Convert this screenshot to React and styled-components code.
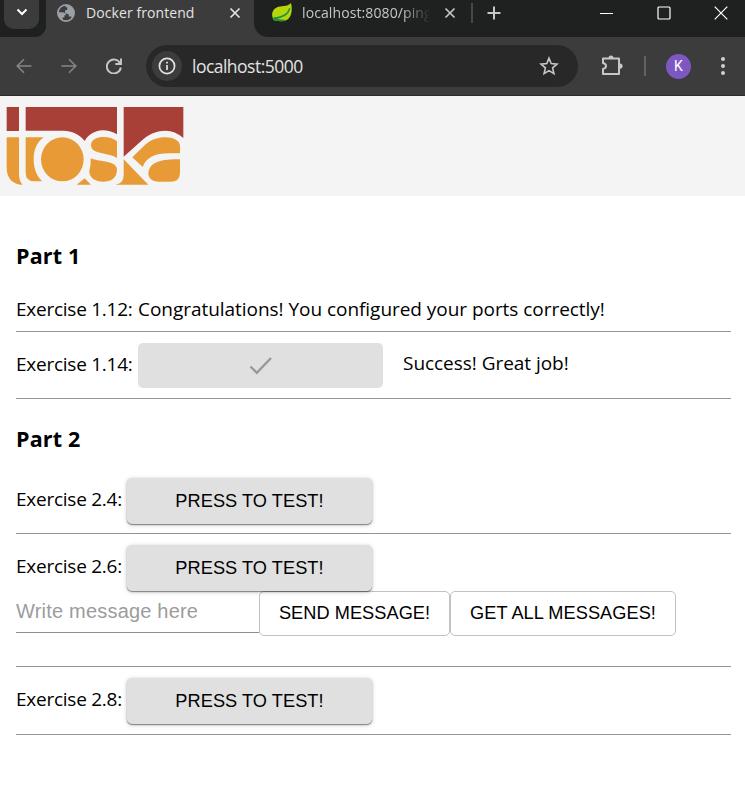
import React from "react";
import styled, { createGlobalStyle, css } from "styled-components";

const Global = createGlobalStyle`
  * { box-sizing: border-box; }
  body { margin: 0; background: #fff; color: #000; font-family: "Open Sans", "Noto Sans", sans-serif; }
  svg { display: block; flex: none; }
`;

const Page = styled.div`
  width: 745px;
  height: 806px;
  overflow: hidden;
  background: #fff;
`;

const TabStrip = styled.div`
  display: flex;
  height: 37px;
  background: #1f2120;
`;

const TabSearchArea = styled.div`
  width: 46px;
  padding-left: 4px;
  background: #1f2120;
  border-bottom-right-radius: 11px;
`;

const TabSearch = styled.div`
  display: flex;
  justify-content: center;
  width: 35px;
  height: 29px;
  padding-top: 4px;
  border-radius: 0 0 10px 10px;
  background: #3c3c3c;
`;

const TabBack = styled.div`
  display: flex;
  background: #3c3c3c;
`;

const Tab = styled.div`
  display: flex;
  align-items: center;
  height: 25px;
  color: ${(p) => (p.$active ? "#e3e3e3" : "#c4c7c5")};
`;

const ActiveTab = styled(Tab)`
  width: 208px;
  padding-left: 11px;
`;

const RestOfStrip = styled.div`
  display: flex;
  width: 491px;
  height: 37px;
  padding-left: 17px;
  background: #1f2120;
  border-bottom-left-radius: 14px;
`;

const TabTitle = styled.span`
  width: ${(p) => p.$w}px;
  margin-left: ${(p) => p.$gap}px;
  overflow: hidden;
  white-space: nowrap;
  font-size: 14px;
  line-height: 22px;
  letter-spacing: ${(p) => p.$track}px;
  ${(p) =>
    p.$fade &&
    css`
      mask-image: linear-gradient(90deg, #000 78%, transparent 100%);
    `}
`;

const Divider = styled.i`
  width: 2px;
  height: 20px;
  background: ${(p) => p.$tone};
  margin: ${(p) => p.$m};
`;

const WindowControls = styled.div`
  display: flex;
  align-items: center;
  height: 25px;
  gap: 43px;
  margin-left: 99px;
  color: #fff;
`;

const Toolbar = styled.div`
  display: flex;
  align-items: center;
  height: 59px;
  padding-left: 16px;
  background: #3c3c3c;
  border-bottom: 1px solid #2a2a2a;
  color: #c7c7c7;
`;

const NavIcons = styled.div`
  display: flex;
  gap: 29px;
  width: 130px;
`;

const AddressBar = styled.div`
  display: flex;
  align-items: center;
  width: 432px;
  height: 42px;
  padding: 0 19px 0 6px;
  border-radius: 21px;
  background: #282828;
`;

const InfoBadge = styled.div`
  display: grid;
  place-items: center;
  width: 30px;
  height: 30px;
  border-radius: 50%;
  background: #3c3c3c;
  color: #e3e3e3;
`;

const Url = styled.span`
  flex: 1;
  margin-left: 10px;
  color: #e3e3e3;
  font-size: 17.5px;
  line-height: 26px;
  letter-spacing: -0.52px;
`;

const Avatar = styled.div`
  display: grid;
  place-items: center;
  width: 25px;
  height: 25px;
  margin-right: 30px;
  border-radius: 50%;
  background: #7e57c2;
  color: #fff;
  font: 14px/25px Roboto, sans-serif;
`;

const SiteHeader = styled.header`
  height: 100px;
  background: #f4f4f4;
`;

const Main = styled.main`
  padding: 42px 14px 0 16px;
`;

const Heading = styled.h3`
  height: 36px;
  margin: ${(p) => p.$before || 0}px 0 ${(p) => p.$after}px;
  font-size: 21.5px;
  line-height: 36px;
  font-weight: 700;
  letter-spacing: 0.15px;
`;

const Exercise = styled.div`
  display: flex;
  flex-direction: column;
  height: ${(p) => p.$h}px;
  padding-top: ${(p) => p.$top}px;
  border-bottom: 1px solid #949494;
`;

const Line = styled.div`
  display: flex;
  align-items: flex-start;
`;

const Text = styled.span`
  margin-top: ${(p) => p.$mt || 0}px;
  white-space: nowrap;
  font-size: 19px;
  line-height: 28px;
  letter-spacing: -0.04px;
`;

const Label = styled(Text)`
  width: ${(p) => p.$w}px;
  letter-spacing: -0.25px;
`;

const buttonBase = css`
  display: flex;
  align-items: center;
  justify-content: center;
  padding: 0;
  border-radius: 5px;
  color: #000;
  font: 18.2px/30px "Liberation Sans", Arial, sans-serif;
  letter-spacing: 0.05px;
  white-space: nowrap;
`;

const TestButton = styled.button`
  ${buttonBase}
  position: relative;
  width: 245px;
  height: 46px;
  padding-bottom: 1px;
  border: 0;
  background: #e0e0e0;
  box-shadow: 0 1px 1px rgba(0, 0, 0, 0.4), 0 1px 4px rgba(0, 0, 0, 0.26);
`;

const DoneButton = styled.button`
  ${buttonBase}
  width: 245px;
  height: 45px;
  margin-right: 20px;
  border: 0;
  background: #e0e0e0;
  color: #989898;
`;

const OutlineButton = styled.button`
  ${buttonBase}
  width: ${(p) => p.$w}px;
  height: 45px;
  padding-bottom: 1px;
  border: 1px solid #c2c2c2;
  background: #fff;
`;

const MessageInput = styled.input`
  width: 243px;
  height: 42px;
  padding: 0 0 1px;
  border: 0;
  border-bottom: 1px solid #8e8e8e;
  outline: 0;
  background: transparent;
  font: 20px/24px "Liberation Sans", Arial, sans-serif;
  letter-spacing: 0.2px;
  &::placeholder { color: #9c9c9c; opacity: 1; }
`;

const Stroke = ({ w, h, d, sw = 2, children, ...rest }) => (
  <svg width={w} height={h} viewBox={`0 0 ${w} ${h}`} fill="none" stroke="currentColor" strokeWidth={sw} {...rest}>
    {d && <path d={d} />}
    {children}
  </svg>
);

const TabClose = styled(Stroke).attrs({ w: 12, h: 12, sw: 1.7, d: "M1.5 1.5l9 9m0-9l-9 9" })`
  margin-left: ${(p) => p.$gap}px;
`;

const Extensions = styled(Stroke)`
  margin: -2px 0 0 23px;
`;

const Logo = () => (
  <svg width="200" height="100" viewBox="0 0 600 300">
    <g fill="#a84038">
      <path d="M20 33H57V105H20Z" />
      <path d="M77 33H351V115Q330 103 308 103C283 104 264 117 254 135C240 115 215 104 190 104H77Z" />
      <path d="M371 33H550V126Q525 104 497 104C465 104 444 117 427 132L371 182Z" />
    </g>
    <g fill="#e89a37">
      <path d="M20 124H57V235Q58 258 68 266C38 266 20 246 20 215Z" />
      <path d="M77 124H131C110 140 101 162 101 190C101 220 112 243 127 256H105Q77 256 77 230Z" />
      <ellipse cx="187" cy="190" rx="64" ry="66" />
      <path d="M254 247L230 266H273Z" />
      <path d="M351 136V186C328 170 273 176 273 148C273 130 292 123 310 123C328 123 340 127 351 136Z" />
      <path d="M272 187C302 199 351 194 351 221C351 246 332 257 310 257C286 257 267 245 268 224Q273 209 272 187Z" />
      <path d="M371 190L445 266H347Q371 262 371 238Z" />
      <path d="M397 184L438 144C460 125 490 120 516 126Q540 133 540 152V172H507C465 172 438 185 428 213Z" />
      <path d="M540 190V230Q540 257 510 257H478C455 257 445 246 445 232C447 202 475 189 540 190Z" />
    </g>
  </svg>
);

const Globe = () => (
  <svg width="18" height="18" viewBox="0 0 18 18">
    <circle cx="9" cy="9" r="8.1" fill="#3c3c3c" stroke="#9aa0a6" strokeWidth="1.7" />
    <path fill="#9aa0a6" d="M1 8.2h4.2c2.4 0 3.8 1.1 3.8 3.1H7.4v2.2H5.6v2.8C2.5 14.8.5 12 1 8.2ZM9.5 1.2C13.8 1.4 17 4.8 17 9c0 2.2-1 4.6-2.6 6v-2.5h-2.7v-2.2c-2.4 0-3.8-1.1-3.8-2.8 0-.9.5-1.6 1.2-1.6h1.1V3.2H8.4c0-1 .4-1.7 1.1-2Z" />
  </svg>
);

const Leaf = () => (
  <svg width="22" height="20" viewBox="0 0 22 20">
    <path fill="#b6d50b" d="M20 0c1.4 5.5 1.1 13.3-3.4 16.5-3.8 2.7-10.9 1.9-14.1.6C-.1 11.8.9 6.5 5.7 4.4 10.1 2.4 16.1 4.2 20 0Z" />
    <path fill="none" stroke="#23913c" strokeWidth="1.5" d="M18.8 5.3c-1.4 5.6-6.6 9.1-15.4 9.9" />
    <path fill="#23913c" d="M2.2 14.3c2.4 0 4.3.6 6 1.9l7.2.8c-3.8 1.8-9.8 1.2-12.9.1Z" />
  </svg>
);

export default function App() {
  return (
    <>
      <Global />
      <Page>
        <TabStrip>
          <TabBack>
            <TabSearchArea>
              <TabSearch>
                <Stroke w={12} h={16} d="M1.5 5.5L6 10l4.5-4.5" color="#fff" />
              </TabSearch>
            </TabSearchArea>
            <ActiveTab $active>
              <Globe />
              <TabTitle $w={142} $gap={11} $track={0.08}>Docker frontend</TabTitle>
              <TabClose $gap={1} />
            </ActiveTab>
            <RestOfStrip>
              <Tab>
                <Leaf />
                <TabTitle $w={128} $gap={9} $track={0.1} $fade>localhost:8080/ping</TabTitle>
                <TabClose $gap={14} />
                <Divider $tone="#474747" $m="0 14px 0 15px" />
                <Stroke w={14} h={14} d="M7 .5v13M.5 7h13" />
              </Tab>
              <WindowControls>
                <Stroke w={14} h={14} d="M0 7.5h13" sw={1} />
                <Stroke w={14} h={14} sw={1.2}><rect x="1" y="1" width="12" height="12" rx="1" /></Stroke>
                <Stroke w={14} h={14} d="M.7.7l12.6 12.6m0-12.6L.7 13.3" sw={1.2} />
              </WindowControls>
            </RestOfStrip>
          </TabBack>
        </TabStrip>
        <Toolbar>
          <NavIcons>
            <Stroke w={16} h={16} d="M15.5 8H1.5M8 1.2L1.2 8 8 14.8" sw={1.6} color="#858585" />
            <Stroke w={16} h={16} d="M.5 8h14M8 1.2L14.8 8 8 14.8" sw={1.6} color="#858585" />
            <Stroke w={16} h={16} d="M14.2 5.5A7 7 0 1 0 14.8 9.5M15 .5V6H9.3" sw={1.9} />
          </NavIcons>
          <AddressBar>
            <InfoBadge>
              <Stroke w={18} h={18} sw={1.7}><circle cx="9" cy="9" r="7.6" /><path d="M9 8v5M9 4.8v1.8" /></Stroke>
            </InfoBadge>
            <Url>localhost:5000</Url>
            <Stroke w={20} h={20} sw={1.6} d="M10 2.2l2.2 5.4 5.8.5-4.4 3.8 1.3 5.7-4.9-3-4.9 3 1.3-5.7L2 8.1l5.8-.5Z" />
          </AddressBar>
          <Extensions w={22} h={22} sw={2}>
            <path strokeLinejoin="round" d="M2 4.5h16V20H2v-5c4-1 4-5 0-6Z" />
            <path fill="currentColor" stroke="none" d="M7.5 4a2.5 2.5 0 0 1 5 0ZM19 9.5a2.6 2.6 0 0 1 0 5.2Z" />
          </Extensions>
          <Divider $tone="#626262" $m="0 20px 0 21px" />
          <Avatar>K</Avatar>
          <svg width="4" height="18" viewBox="0 0 4 18" fill="#d0d0d0"><circle cx="2" cy="2" r="2" /><circle cx="2" cy="9" r="2" /><circle cx="2" cy="16" r="2" /></svg>
        </Toolbar>
        <SiteHeader><Logo /></SiteHeader>
        <Main>
          <Heading $after={21}>Part 1</Heading>
          <Exercise $h={37} $top={0}>
            <Line>
              <Label $w={122}>Exercise 1.12:</Label>
              <Text>Congratulations! You configured your ports correctly!</Text>
            </Line>
          </Exercise>
          <Exercise $h={67} $top={11}>
            <Line>
              <Label $w={122} $mt={7}>Exercise 1.14:</Label>
              <DoneButton><Stroke w={24} h={20} d="M1.5 10.5l6.3 6.3L22 2" sw={2.3} /></DoneButton>
              <Text $mt={6}>Success! Great job!</Text>
            </Line>
          </Exercise>
          <Heading $before={22} $after={20}>Part 2</Heading>
          <Exercise $h={57} $top={1}>
            <Line>
              <Label $w={111} $mt={7}>Exercise 2.4:</Label>
              <TestButton>PRESS TO TEST!</TestButton>
            </Line>
          </Exercise>
          <Exercise $h={133} $top={11}>
            <Line>
              <Label $w={111} $mt={7}>Exercise 2.6:</Label>
              <TestButton>PRESS TO TEST!</TestButton>
            </Line>
            <Line>
              <MessageInput placeholder="Write message here" />
              <OutlineButton $w={191}>SEND MESSAGE!</OutlineButton>
              <OutlineButton $w={226}>GET ALL MESSAGES!</OutlineButton>
            </Line>
          </Exercise>
          <Exercise $h={68} $top={11}>
            <Line>
              <Label $w={111} $mt={7}>Exercise 2.8:</Label>
              <TestButton>PRESS TO TEST!</TestButton>
            </Line>
          </Exercise>
        </Main>
      </Page>
    </>
  );
}
